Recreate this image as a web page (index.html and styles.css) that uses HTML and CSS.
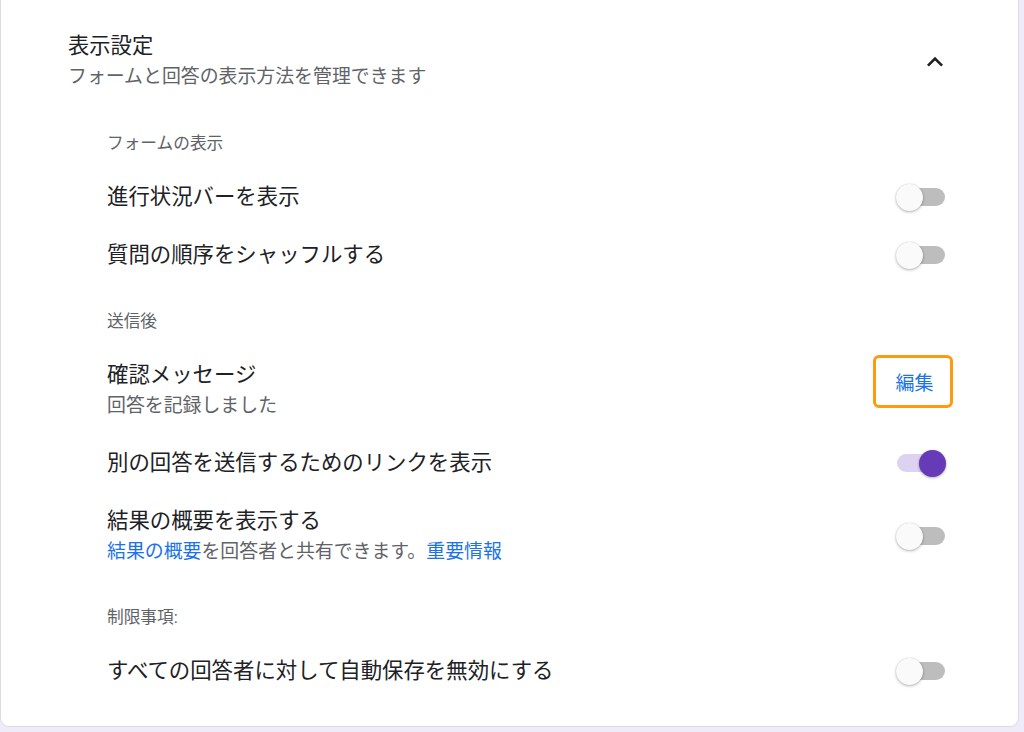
FILE: index.html
```html
<!DOCTYPE html>
<html lang="ja">
<head>
<meta charset="utf-8">
<title>表示設定</title>
<link rel="stylesheet" href="styles.css">
</head>
<body>
<div class="card">
  <div class="header">
    <div class="header-text">
      <div class="title">表示設定</div>
      <div class="subtitle">フォームと回答の表示方法を管理できます</div>
    </div>
    <svg class="chevron" viewBox="0 0 24 24" width="32" height="32"><path d="M12 8l-6 6 1.41 1.41L12 10.83l4.59 4.58L18 14z" fill="#202124"/></svg>
  </div>

  <div class="section first">
    <div class="section-title">フォームの表示</div>
    <div class="row">
      <div class="label">進行状況バーを表示</div>
      <div class="toggle"><span class="track"></span><span class="thumb"></span></div>
    </div>
    <div class="row">
      <div class="label">質問の順序をシャッフルする</div>
      <div class="toggle"><span class="track"></span><span class="thumb"></span></div>
    </div>
  </div>

  <div class="section">
    <div class="section-title">送信後</div>
    <div class="row row-top">
      <div class="text">
        <div class="label">確認メッセージ</div>
        <div class="sub">回答を記録しました</div>
      </div>
      <button class="edit">編集</button>
    </div>
    <div class="row">
      <div class="label">別の回答を送信するためのリンクを表示</div>
      <div class="toggle on"><span class="track"></span><span class="thumb"></span></div>
    </div>
    <div class="row">
      <div class="text">
        <div class="label">結果の概要を表示する</div>
        <div class="sub"><a class="link">結果の概要</a>を回答者と共有できます。<a class="link">重要情報</a></div>
      </div>
      <div class="toggle"><span class="track"></span><span class="thumb"></span></div>
    </div>
  </div>

  <div class="section">
    <div class="section-title">制限事項:</div>
    <div class="row">
      <div class="label">すべての回答者に対して自動保存を無効にする</div>
      <div class="toggle"><span class="track"></span><span class="thumb"></span></div>
    </div>
  </div>
</div>
</body>
</html>
```

FILE: styles.css
```css
* { box-sizing: border-box; }
html, body {
  margin: 0;
  padding: 0;
  background: #f0ebf8;
}
body {
  font-family: Roboto, "Noto Sans CJK JP", sans-serif;
  color: #202124;
  width: 1024px;
  height: 732px;
  overflow: hidden;
}
.card {
  width: 1019px;
  background: #fff;
  border: 1px solid #dadce0;
  border-top: none;
  border-radius: 0 0 9px 9px;
  padding-bottom: 26px;
}
.header {
  display: flex;
  align-items: center;
  justify-content: space-between;
  padding: 32px 67px 0 67px;
}
.title {
  font-size: 21.3px;
  line-height: 28px;
  color: #202124;
}
.subtitle {
  margin-top: 3px;
  font-size: 18.9px;
  line-height: 28px;
  color: #5f6368;
}
.chevron { display: block; }
.section {
  padding: 28px 72px 0 106px;
}
.section.first { padding-top: 43px; }
.section-title {
  font-size: 16.7px;
  line-height: 20px;
  color: #5f6368;
  margin-bottom: 14px;
}
.row {
  display: flex;
  align-items: center;
  justify-content: space-between;
  padding: 15px 0;
  min-height: 58px;
}
.row-top { align-items: flex-start; }
.label {
  font-size: 21.4px;
  line-height: 28px;
  color: #202124;
}
.sub {
  margin-top: 4px;
  font-size: 18.9px;
  line-height: 26px;
  color: #5f6368;
}
.link { color: #1a73e8; text-decoration: none; }
.edit {
  margin: -6px -7px 0 0;
  width: 80px;
  height: 53px;
  border: 3px solid #fd9a0f;
  border-radius: 6px;
  background: #fff;
  color: #1a73e8;
  font-family: Roboto, "Noto Sans CJK JP", sans-serif;
  font-size: 19px;
  padding: 0 0 0 3px;
}
.toggle {
  position: relative;
  width: 50px;
  height: 28px;
  flex: none;
}
.track {
  position: absolute;
  left: 1px;
  right: 1px;
  top: 5px;
  height: 18px;
  border-radius: 9px;
  background: #bdbdbd;
}
.thumb {
  position: absolute;
  top: 1px;
  left: 0;
  width: 27px;
  height: 27px;
  border-radius: 50%;
  background: #fafafa;
  box-shadow: 0 1px 3px rgba(0,0,0,0.3), 0 0 1px rgba(0,0,0,0.15);
}
.toggle.on .track { background: #ddd3f0; }
.toggle.on .thumb {
  left: auto;
  right: 0;
  background: #673ab7;
}
```
